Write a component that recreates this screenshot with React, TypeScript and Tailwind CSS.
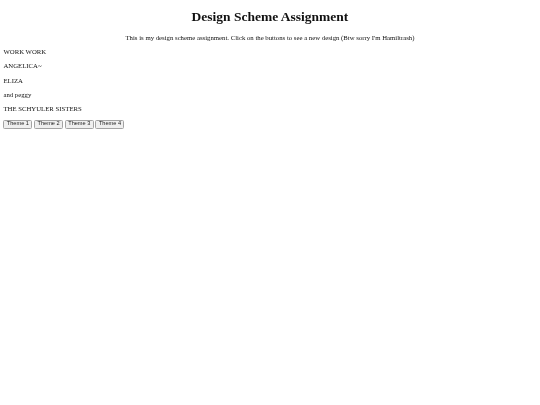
import { useState } from "react";

type Theme = { bg: string; text: string };

const themes: Theme[] = [
  { bg: "bg-white", text: "text-[#111]" },
  { bg: "bg-[#fdf1e3]", text: "text-[#5b2a0e]" },
  { bg: "bg-[#e8f0fb]", text: "text-[#1b2f5c]" },
  { bg: "bg-[#1f1f1f]", text: "text-[#f2e6c9]" },
];

const lines = ["WORK WORK", "ANGELICA~", "ELIZA", "and peggy", "THE SCHYULER SISTERS"];

export default function App() {
  const [theme, setTheme] = useState(0);
  const t = themes[theme];

  return (
    <div className={`min-h-screen w-full ${t.bg}`}>
      <div
        className={`px-[3.4px] pb-1 font-['Liberation_Serif',serif] [will-change:transform] ${t.text}`}
      >
        <h1 className="my-[9px] text-center text-[13.5px] leading-[15.5px] font-bold">
          Design Scheme Assignment
        </h1>
        <p className="my-[6.6px] text-center text-[6.75px] leading-[7.7px]">
          This is my design scheme assignment. Click on the buttons to see a new design (Btw sorry I'm Hamiltrash)
        </p>
        {lines.map((line) => (
          <p key={line} className="my-[6.7px] text-[6.75px] leading-[7.7px]">
            {line}
          </p>
        ))}
        <div className="flex gap-[1.7px]">
          {[1, 2, 3, 4].map((n, i) => (
            <button
              key={n}
              type="button"
              onClick={() => setTheme(i)}
              className="flex h-[8.7px] w-[29px] items-center justify-center rounded-[1.5px] border-[0.6px] border-[#a3a3a3] bg-[#efefef] font-['Liberation_Sans',Arial,sans-serif] text-[5.6px] leading-none text-[#222]"
            >
              Theme {n}
            </button>
          ))}
        </div>
      </div>
    </div>
  );
}
